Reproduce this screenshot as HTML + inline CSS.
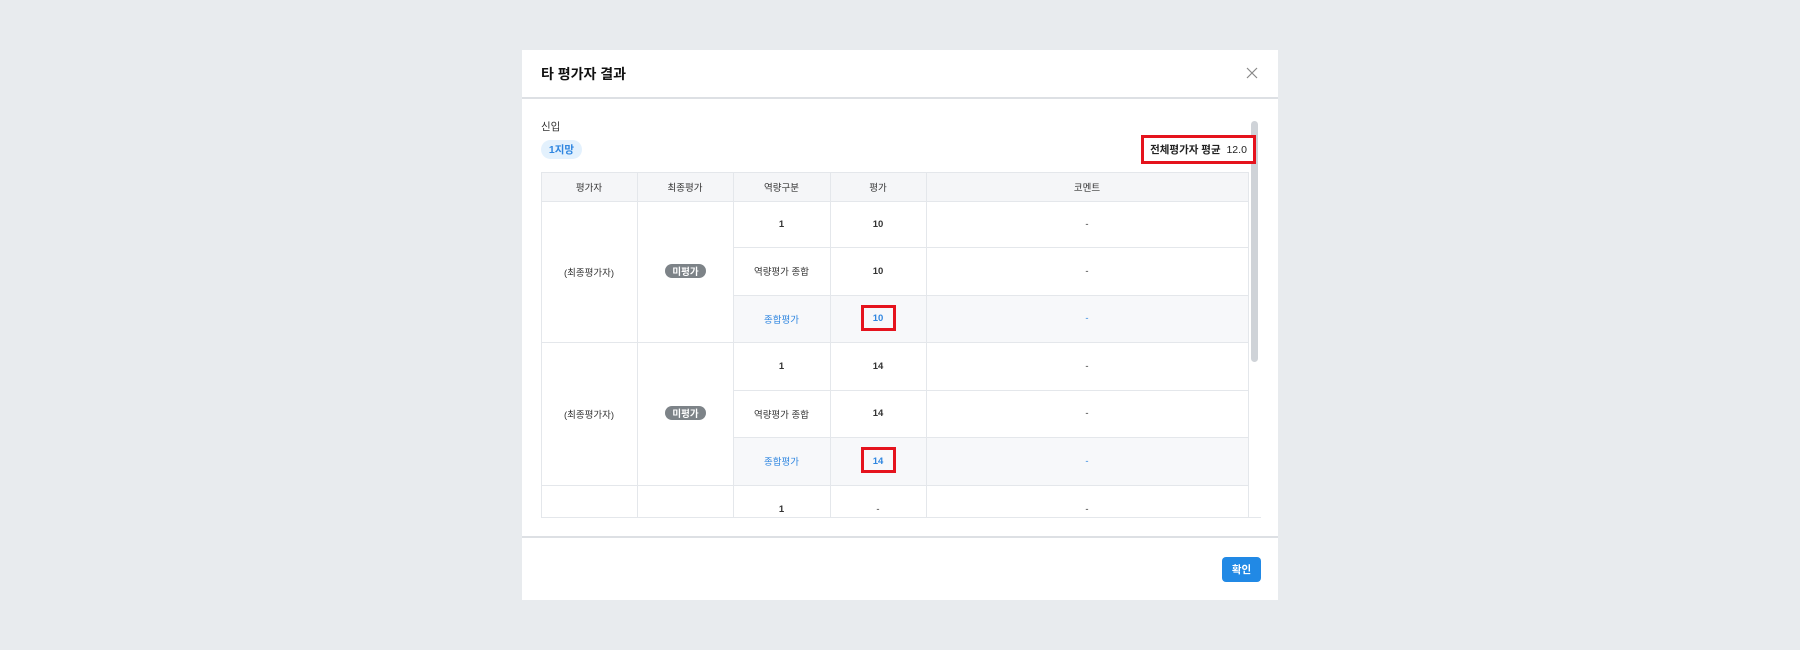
<!DOCTYPE html>
<html><head><meta charset="utf-8"><style>
*{margin:0;padding:0;box-sizing:border-box}
body{width:1800px;height:650px;background:#e8ebee;position:relative;overflow:hidden;font-family:"Liberation Sans","Noto Sans CJK KR",sans-serif;color:#222}
.a{position:absolute}
.modal{left:522px;top:50px;width:756px;height:550px;background:#fff}
.t{font-size:9.5px;color:#333;text-align:center;display:flex;align-items:center;justify-content:center}
.b{color:#2f86e0}
.vl{position:absolute;width:1px;background:#e4e7eb}
.hl{position:absolute;height:1px;background:#e4e7eb}
.red{position:absolute;border:3px solid #e5131d}
.badge{background:#7d8388;color:#fff;font-size:9.5px;font-weight:bold;border-radius:7px;width:41px;height:14px;display:flex;align-items:center;justify-content:center}
</style></head><body>
<div class="a modal"></div>
<div class="a" style="left:541px;top:64px;font-size:14px;font-weight:bold;color:#111">타 평가자 결과</div>
<svg class="a" style="left:1246px;top:67px" width="12" height="12" viewBox="0 0 12 12"><path d="M1 1L11 11M11 1L1 11" stroke="#888" stroke-width="1.2"/></svg>
<div class="hl" style="left:522px;top:97px;width:756px;background:#dde0e4;height:2px"></div>
<div class="a" style="left:541px;top:119px;font-size:10.5px;color:#333">신입</div>
<div class="a" style="left:541px;top:140px;width:41px;height:19px;border-radius:10px;background:#e3f1fd;color:#2f86e0;font-size:10.5px;font-weight:bold;display:flex;align-items:center;justify-content:center">1지망</div>
<div class="a" style="left:1251px;top:121px;width:7px;height:241px;background:#cfd3d8;border-radius:4px"></div>
<div class="red" style="left:1141px;top:135px;width:115px;height:29px;background:#fff;display:flex;align-items:center;justify-content:center;font-size:10.5px;color:#222;white-space:pre;font-weight:bold">전체평가자 평균  <span style="font-weight:normal">12.0</span></div>
<!-- table -->
<div class="a" style="left:541px;top:172px;width:707px;height:29px;background:#f5f6f8"></div>
<div class="a" style="left:733px;top:295px;width:515px;height:47px;background:#f7f8fa"></div>
<div class="a" style="left:733px;top:438px;width:515px;height:47px;background:#f7f8fa"></div>
<div class="hl" style="left:541px;top:172px;width:707px"></div>
<div class="hl" style="left:541px;top:201px;width:707px"></div>
<div class="hl" style="left:733px;top:247px;width:515px"></div>
<div class="hl" style="left:733px;top:295px;width:515px"></div>
<div class="hl" style="left:541px;top:342px;width:707px"></div>
<div class="hl" style="left:733px;top:390px;width:515px"></div>
<div class="hl" style="left:733px;top:437px;width:515px"></div>
<div class="hl" style="left:541px;top:485px;width:707px"></div>
<div class="hl" style="left:541px;top:517px;width:720px"></div>
<div class="vl" style="left:541px;top:172px;height:345px"></div>
<div class="vl" style="left:637px;top:172px;height:345px"></div>
<div class="vl" style="left:733px;top:172px;height:345px"></div>
<div class="vl" style="left:830px;top:172px;height:345px"></div>
<div class="vl" style="left:926px;top:172px;height:345px"></div>
<div class="vl" style="left:1248px;top:172px;height:345px"></div>
<div class="a t" style="left:541px;top:172px;width:96px;height:29px">평가자</div>
<div class="a t" style="left:637px;top:172px;width:96px;height:29px">최종평가</div>
<div class="a t" style="left:733px;top:172px;width:97px;height:29px">역량구분</div>
<div class="a t" style="left:830px;top:172px;width:96px;height:29px">평가</div>
<div class="a t" style="left:926px;top:172px;width:322px;height:29px">코멘트</div>
<!-- group 1 -->
<div class="a t" style="left:541px;top:201px;width:96px;height:141px">(최종평가자)</div>
<div class="a" style="left:665px;top:264px"><div class="badge">미평가</div></div>
<div class="a t" style="left:733px;top:201px;width:97px;height:46px;font-weight:bold">1</div>
<div class="a t" style="left:830px;top:201px;width:96px;height:46px;font-weight:bold">10</div>
<div class="a t" style="left:926px;top:201px;width:322px;height:46px">-</div>
<div class="a t" style="left:733px;top:247px;width:97px;height:48px">역량평가 종합</div>
<div class="a t" style="left:830px;top:247px;width:96px;height:48px;font-weight:bold">10</div>
<div class="a t" style="left:926px;top:247px;width:322px;height:48px">-</div>
<div class="a t b" style="left:733px;top:295px;width:97px;height:47px">종합평가</div>
<div class="a t b" style="left:830px;top:295px;width:96px;height:47px;font-weight:bold">10</div>
<div class="a t b" style="left:926px;top:295px;width:322px;height:47px">-</div>
<div class="red" style="left:861px;top:305px;width:35px;height:26px"></div>
<!-- group 2 -->
<div class="a t" style="left:541px;top:342px;width:96px;height:143px">(최종평가자)</div>
<div class="a" style="left:665px;top:406px"><div class="badge">미평가</div></div>
<div class="a t" style="left:733px;top:342px;width:97px;height:48px;font-weight:bold">1</div>
<div class="a t" style="left:830px;top:342px;width:96px;height:48px;font-weight:bold">14</div>
<div class="a t" style="left:926px;top:342px;width:322px;height:48px">-</div>
<div class="a t" style="left:733px;top:390px;width:97px;height:47px">역량평가 종합</div>
<div class="a t" style="left:830px;top:390px;width:96px;height:47px;font-weight:bold">14</div>
<div class="a t" style="left:926px;top:390px;width:322px;height:47px">-</div>
<div class="a t b" style="left:733px;top:437px;width:97px;height:48px">종합평가</div>
<div class="a t b" style="left:830px;top:437px;width:96px;height:48px;font-weight:bold">14</div>
<div class="a t b" style="left:926px;top:437px;width:322px;height:48px">-</div>
<div class="red" style="left:861px;top:447px;width:35px;height:26px"></div>
<!-- group 3 partial -->
<div class="a t" style="left:733px;top:498px;width:97px;height:22px;font-weight:bold">1</div>
<div class="a t" style="left:830px;top:498px;width:96px;height:22px">-</div>
<div class="a t" style="left:926px;top:498px;width:322px;height:22px">-</div>
<!-- footer -->
<div class="hl" style="left:522px;top:536px;width:756px;background:#dde0e4;height:2px"></div>
<div class="a" style="left:1222px;top:557px;width:39px;height:25px;background:#2189e5;border-radius:4px;color:#fff;font-size:10.5px;font-weight:bold;display:flex;align-items:center;justify-content:center">확인</div>
</body></html>
